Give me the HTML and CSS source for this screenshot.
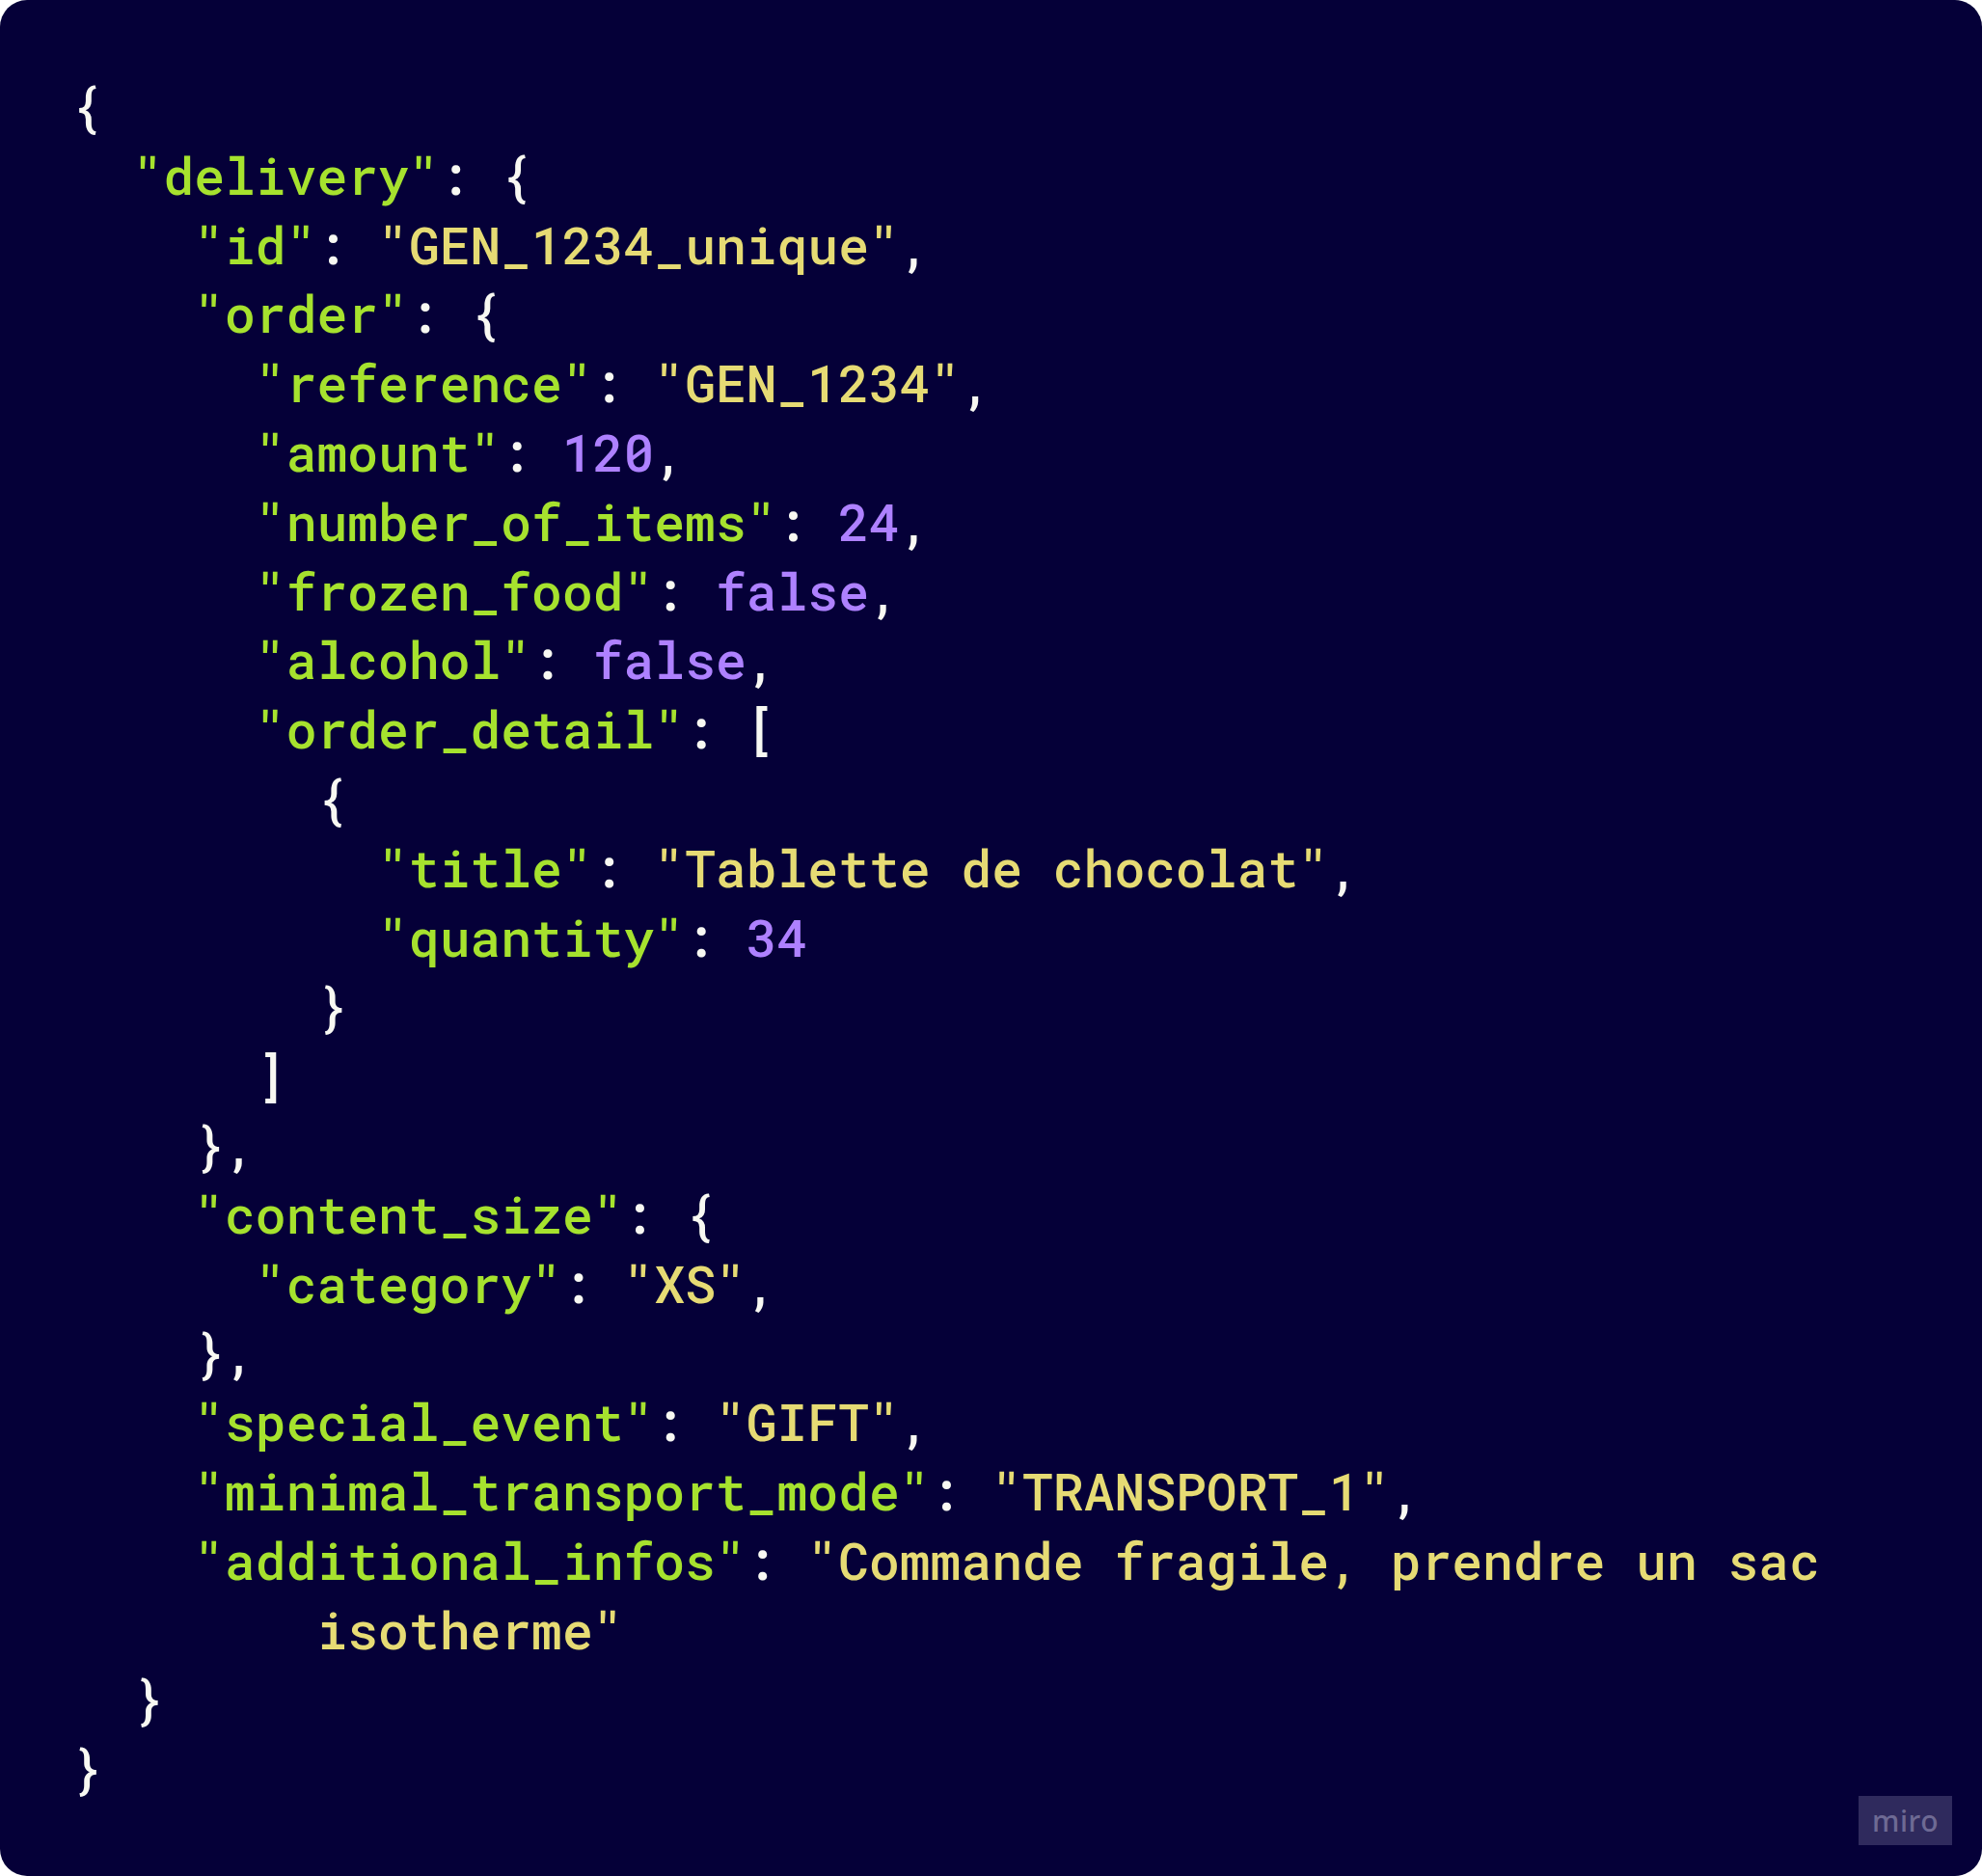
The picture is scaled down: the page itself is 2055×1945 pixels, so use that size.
FILE: index.html
```html
<!DOCTYPE html>
<html lang="fr">
<head>
<meta charset="utf-8">
<title>JSON delivery</title>
<link rel="stylesheet" href="styles.css">
</head>
<body>
<main class="card">
<pre class="code"><span class="p">{</span>
  <span class="k">"delivery"</span><span class="p">: {</span>
    <span class="k">"id"</span><span class="p">: </span><span class="s">"GEN_1234_unique"</span><span class="p">,</span>
    <span class="k">"order"</span><span class="p">: {</span>
      <span class="k">"reference"</span><span class="p">: </span><span class="s">"GEN_1234"</span><span class="p">,</span>
      <span class="k">"amount"</span><span class="p">: </span><span class="n">120</span><span class="p">,</span>
      <span class="k">"number_of_items"</span><span class="p">: </span><span class="n">24</span><span class="p">,</span>
      <span class="k">"frozen_food"</span><span class="p">: </span><span class="n">false</span><span class="p">,</span>
      <span class="k">"alcohol"</span><span class="p">: </span><span class="n">false</span><span class="p">,</span>
      <span class="k">"order_detail"</span><span class="p">: [</span>
        <span class="p">{</span>
          <span class="k">"title"</span><span class="p">: </span><span class="s">"Tablette de chocolat"</span><span class="p">,</span>
          <span class="k">"quantity"</span><span class="p">: </span><span class="n">34</span>
        <span class="p">}</span>
      <span class="p">]</span>
    <span class="p">},</span>
    <span class="k">"content_size"</span><span class="p">: {</span>
      <span class="k">"category"</span><span class="p">: </span><span class="s">"XS"</span><span class="p">,</span>
    <span class="p">},</span>
    <span class="k">"special_event"</span><span class="p">: </span><span class="s">"GIFT"</span><span class="p">,</span>
    <span class="k">"minimal_transport_mode"</span><span class="p">: </span><span class="s">"TRANSPORT_1"</span><span class="p">,</span>
    <span class="k">"additional_infos"</span><span class="p">: </span><span class="s">"Commande fragile, prendre un sac</span>
        <span class="s">isotherme"</span>
  <span class="p">}</span>
<span class="p">}</span></pre>
<div class="badge">miro</div>
</main>
</body>
</html>
```

FILE: styles.css
```css
html, body {
  margin: 0;
  padding: 0;
  background: #ffffff;
}

.card {
  position: relative;
  box-sizing: border-box;
  width: 2055px;
  height: 1945px;
  background: #050038;
  border-radius: 28px;
  padding: 74px 0 0 74px;
  overflow: hidden;
}

.code {
  margin: 0;
  font-family: "Roboto Mono", "DejaVu Sans Mono", "Liberation Mono", monospace;
  font-size: 53px;
  font-weight: 500;
  line-height: 71.8px;
  white-space: pre;
  color: #f8f8f2;
}

.p { color: #f8f8f2; }
.k { color: #a6e22e; }
.s { color: #e6db74; }
.n { color: #ae81ff; }

.badge {
  position: absolute;
  right: 31px;
  bottom: 32px;
  width: 97px;
  height: 51px;
  display: flex;
  align-items: center;
  justify-content: center;
  background: #2f2a5d;
  color: #6e6a94;
  font-family: "Noto Sans", "Open Sans", sans-serif;
  font-size: 30px;
  font-weight: 500;
  letter-spacing: 0.5px;
}
```
